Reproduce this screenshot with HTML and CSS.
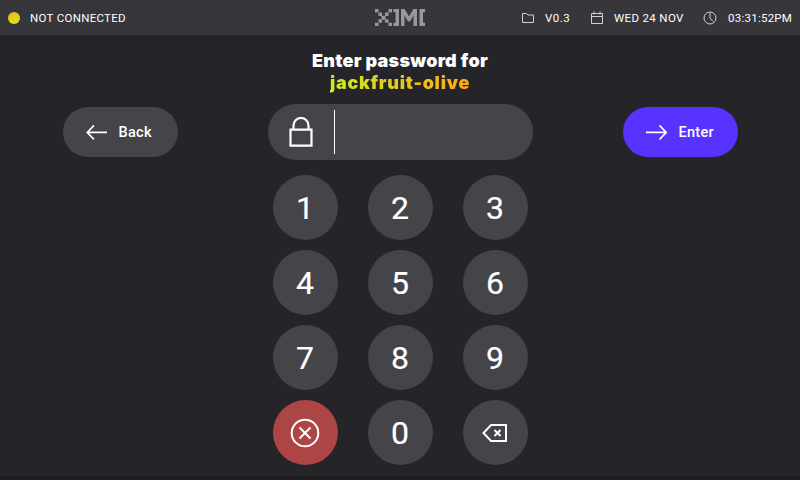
FILE: index.html
```html
<!DOCTYPE html>
<html lang="en">
<head>
<meta charset="utf-8">
<title>Enter password</title>
<link rel="stylesheet" href="styles.css">
</head>
<body>
<div class="screen">
  <header class="topbar">
    <div class="connection"><span class="dot"></span><span class="label label-connection">NOT CONNECTED</span></div>
    <svg class="logo" width="52" height="18" viewBox="0 0 52 18" fill="#98979b">
      <path d="M1 0h3.500v3.500H1zM14.500 0H18v3.500h-3.500zM4.500 3.500H8V7H4.500zM11 3.500h3.500V7H11zM7.500 6.700h4v4h-4zM4.500 10.200H8v3.500H4.500zM11 10.200h3.500v3.500H11zM1 13.700h3.500V17H1zM14.500 13.700H18V17h-3.500z"/>
      <path d="M19.500 0H25v17h-5.500v-3.200h2V3.200h-2z"/>
      <path d="M27 0h3.600l4.400 7.500L39.400 0H43v17h-3.500V6.500L36 12.500h-2l-3.500-6V17H27z"/>
      <path d="M45.500 0H51v3.200h-2v10.600h2V17h-5.500z"/>
    </svg>
    <div class="status">
      <svg width="14" height="12" viewBox="0 0 14 12" class="icon thin"><path d="M1.500 1.500h4l1.500 1.500h5.500v7.500h-11z"/></svg>
      <span class="label label-version">V0.3</span>
      <svg width="14" height="14" viewBox="0 0 14 14" class="icon thin"><path d="M1.500 2.500h11v10h-11zM1.500 5.500h11M4 .5v3M10 .5v3"/></svg>
      <span class="label label-date">WED 24 NOV</span>
      <svg width="14" height="14" viewBox="0 0 14 14" class="icon thin"><circle cx="7" cy="7" r="6"/><path d="M7 2v5l3 3.500"/></svg>
      <span class="label label-time">03:31:52PM</span>
    </div>
  </header>
  <main>
    <h1><span class="line line-title">Enter password for</span><span class="line line-name">jackfruit-olive</span></h1>
    <div class="entry">
      <button class="pill"><svg width="22" height="16" viewBox="0 0 22 16" class="icon arrow"><path d="M21 8.400H1.200M8 1.400l-6.800 7 6.800 7"/></svg><span>Back</span></button>
      <div class="field">
        <svg width="24" height="31" viewBox="0 0 24 31" class="icon lock"><path d="M1.500 12.700h21v16h-21zM4.500 12.700V8.500a7.500 7.500 0 0 1 15 0v4.200"/></svg>
        <span class="caret"></span>
      </div>
      <button class="pill primary"><svg width="22" height="16" viewBox="0 0 22 16" class="icon arrow"><path d="M0 8.400h20.300M13.500 1.400l6.800 7-6.800 7"/></svg><span>Enter</span></button>
    </div>
    <div class="keypad">
      <button class="key">1</button><button class="key">2</button><button class="key">3</button>
      <button class="key">4</button><button class="key">5</button><button class="key">6</button>
      <button class="key">7</button><button class="key">8</button><button class="key">9</button>
      <button class="key clear" aria-label="Clear"><svg width="30" height="30" viewBox="0 0 30 30" class="icon"><circle cx="15" cy="15" r="13.300"/><path d="M9.500 9.500l11 11M20.500 9.500l-11 11"/></svg></button>
      <button class="key">0</button>
      <button class="key" aria-label="Delete"><svg width="26" height="20" viewBox="0 0 26 20" class="icon"><path d="M9 2h15v16H9L1.500 10zM12.500 7l6 6M18.500 7l-6 6"/></svg></button>
    </div>
  </main>
</div>
</body>
</html>
```
FILE: styles.css
```css
* { box-sizing: border-box; }
body { margin: 0; background: #252429; color: #fff; font-family: Roboto, "Liberation Sans", sans-serif; }
.screen { height: 480px; overflow: hidden; border-bottom: 4px solid #1f1c21; }
.topbar { height: 35px; background: #37363b; display: grid; grid-template-columns: 1fr 52px 1fr; align-items: center; padding: 0 8px; }
.connection { display: flex; align-items: center; gap: 10px; }
.dot { width: 12px; height: 12px; border-radius: 50%; background: linear-gradient(160deg, #f7b01e, #d0ee1a); }
.label { font-size: 11.5px; line-height: 14px; letter-spacing: 0.3px; white-space: nowrap; flex: none; }
.label-connection { width: 98px; }
.label-version { width: 26px; margin: 0 19px 0 10px; letter-spacing: 0.5px; }
.label-date { width: 70px; margin: 0 19px 0 10px; letter-spacing: 0.35px; }
.label-time { width: 64px; margin-left: 11px; letter-spacing: 0.25px; }
.status { display: flex; align-items: center; justify-content: flex-end; }
.icon { fill: none; stroke: #fff; stroke-width: 2; flex: none; display: block; }
.thin { stroke: #d0d0d2; stroke-width: 1; }
.arrow { stroke-width: 1.6; }
.lock { stroke-width: 2.2; }
h1 { margin: 15px 0 0; font-family: Inter, Roboto, sans-serif; font-size: 18px; line-height: 22px; font-weight: 900; display: flex; flex-direction: column; align-items: center; }
.line { white-space: nowrap; }
.line-title { letter-spacing: 0.25px; }
.line-name { letter-spacing: 0.7px; color: transparent; background: linear-gradient(90deg, #c9ee20, #ffa71c); -webkit-background-clip: text; background-clip: text; }
.entry { margin: 10px 62px 0 63px; height: 56px; display: flex; justify-content: space-between; align-items: center; }
button { border: 0; padding: 0; color: #fff; font-family: inherit; background: #454449; }
.pill { width: 115px; height: 50px; border-radius: 25px; display: flex; align-items: center; padding-left: 23px; gap: 10.5px; font-size: 14.5px; font-weight: 500; letter-spacing: 0.3px; }
.primary { background: #5833ff; }
.field { width: 265px; height: 56px; border-radius: 28px; background: #454449; display: flex; align-items: center; padding-left: 21px; }
.caret { width: 1px; height: 44px; background: #fff; margin-left: 21px; }
.keypad { margin: 15px auto 0; width: 255px; display: grid; grid-template-columns: repeat(3, 65px); gap: 10px 30px; }
.key { width: 65px; height: 65px; border-radius: 50%; display: flex; align-items: center; justify-content: center; font-size: 32px; line-height: 38px; -webkit-text-stroke: 0.2px #fff; }
.clear { background: #ad4546; }
```
